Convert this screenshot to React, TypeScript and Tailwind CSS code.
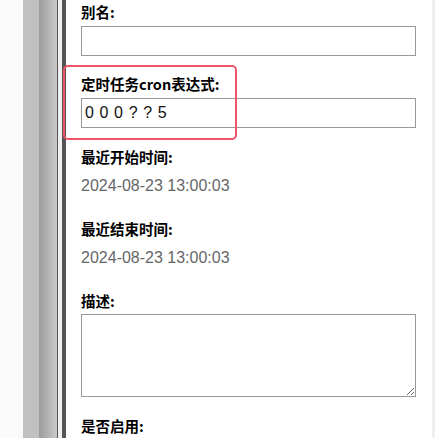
import type { ReactNode } from 'react'

const cjk = "font-['Noto_Sans_CJK_SC',sans-serif]"
const latin = "font-['Liberation_Sans','Noto_Sans_CJK_SC',sans-serif]"

function Label({ children }: { children: ReactNode }) {
  return (
    <p className={`${cjk} h-5 text-[14.5px] font-bold leading-5 text-black`}>{children}</p>
  )
}

function DateText({ children }: { children: ReactNode }) {
  return <p className={`${latin} mt-[7px] text-[16px] leading-6 text-[#666]`}>{children}</p>
}

export default function App() {
  return (
    <div className="relative flex h-[438px] w-[435px] overflow-hidden bg-white">
      <div className="w-[23px] bg-[#fafafa]" />
      <div className="w-[17px] bg-[#c0c0c0]" />
      <div className="w-[18px] bg-gradient-to-r from-[#9c9c9c] to-[#c9c9c9]" />
      <div className="w-px bg-[#555]" />
      <div className="w-1 bg-[#efefef]" />
      <div className="w-1 bg-[#555]" />

      <div className="flex flex-1 flex-col bg-white pl-[15px] pr-4 pt-[2px]">
        <div className="flex flex-col">
          <Label>别名:</Label>
          <input className="mt-1 h-[30px] w-[335px] border border-[#999] bg-white outline-none" />
        </div>

        <div className="mt-[18px] flex flex-col">
          <Label>定时任务cron表达式:</Label>
          <input
            defaultValue="0 0 0 ? ? 5"
            className={`${latin} mt-1 h-[30px] w-[335px] border border-[#999] bg-white px-[3px] text-[16px] tracking-[0.6px] text-[#111] outline-none`}
          />
        </div>

        <div className="mt-[19px] flex flex-col">
          <Label>最近开始时间:</Label>
          <DateText>2024-08-23 13:00:03</DateText>
        </div>

        <div className="mt-[21px] flex flex-col">
          <Label>最近结束时间:</Label>
          <DateText>2024-08-23 13:00:03</DateText>
        </div>

        <div className="mt-[21px] flex flex-col">
          <Label>描述:</Label>
          <textarea className="mt-[3px] h-[83px] w-[335px] border border-[#999] bg-white outline-none" />
        </div>

        <div className="mt-[19px] flex flex-col">
          <Label>是否启用:</Label>
        </div>
      </div>

      <div className="w-[3px] bg-[#f0f0f0]" />

      <div className="pointer-events-none absolute left-[63px] top-[65px] h-[75px] w-[174px] rounded-[5px] border-2 border-[#ef5467]" />
    </div>
  )
}
